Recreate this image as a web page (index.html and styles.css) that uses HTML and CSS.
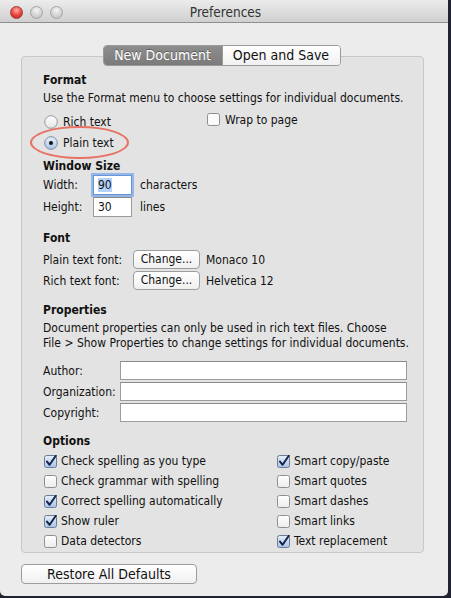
FILE: index.html
```html
<!DOCTYPE html>
<html>
<head>
<meta charset="utf-8">
<title>Preferences</title>
<link rel="stylesheet" href="styles.css">
</head>
<body>
<div class="window">
  <div class="titlebar">
    <div class="lights">
      <span class="light red"></span>
      <span class="light"></span>
      <span class="light"></span>
    </div>
    <div class="title">Preferences</div>
  </div>
  <div class="content">
    <div class="tabview">
      <div class="tabs">
        <div class="tab selected">New Document</div>
        <div class="tab">Open and Save</div>
      </div>
      <div class="box">
        <div class="heading">Format</div>
        <div class="text first">Use the Format menu to choose settings for individual documents.</div>
        <div class="format-grid">
          <div class="opt radio-opt">
            <svg class="radio" width="14" height="14" viewBox="0 0 14 14"><defs><linearGradient id="rg1" x1="0" y1="0" x2="0" y2="1"><stop offset="0" stop-color="#ffffff"/><stop offset="1" stop-color="#e4e4e4"/></linearGradient></defs><circle cx="7" cy="7" r="6.3" fill="url(#rg1)" stroke="#8e8e8e" stroke-width="0.9"/></svg>
            <span>Rich text</span>
          </div>
          <div class="opt check-opt">
            <svg class="cb" width="13" height="13" viewBox="0 0 13 13"><rect x="0.5" y="0.5" width="12" height="12" rx="2" fill="#fbfbfb" stroke="#8f8f8f"/></svg>
            <span>Wrap to page</span>
          </div>
          <div class="opt radio-opt">
            <svg class="radio" width="14" height="14" viewBox="0 0 14 14"><defs><linearGradient id="rg2" x1="0" y1="0" x2="0" y2="1"><stop offset="0" stop-color="#e8f1fb"/><stop offset="1" stop-color="#a9c6ea"/></linearGradient></defs><circle cx="7" cy="7" r="6.3" fill="url(#rg2)" stroke="#6f7f99" stroke-width="0.9"/><circle cx="7" cy="7" r="2" fill="#111"/></svg>
            <span>Plain text</span>
            <span class="annotation"></span>
          </div>
          <div></div>
        </div>

        <div class="heading ws">Window Size</div>
        <div class="field-row size-row">
          <span class="lbl-short">Width:</span>
          <span class="input small focused"><span class="sel">90</span></span>
          <span class="unit">characters</span>
        </div>
        <div class="field-row size-row">
          <span class="lbl-short">Height:</span>
          <span class="input small">30</span>
          <span class="unit">lines</span>
        </div>

        <div class="heading font-h">Font</div>
        <div class="field-row font-row first-font">
          <span class="lbl-font">Plain text font:</span>
          <span class="btn">Change...</span>
          <span class="unit">Monaco 10</span>
        </div>
        <div class="field-row font-row">
          <span class="lbl-font">Rich text font:</span>
          <span class="btn">Change...</span>
          <span class="unit">Helvetica 12</span>
        </div>

        <div class="heading props-h">Properties</div>
        <div class="text desc">Document properties can only be used in rich text files. Choose<br>File &gt; Show Properties to change settings for individual documents.</div>
        <div class="field-row prop-row first-prop">
          <span class="lbl-prop">Author:</span>
          <span class="input wide"></span>
        </div>
        <div class="field-row prop-row">
          <span class="lbl-prop">Organization:</span>
          <span class="input wide"></span>
        </div>
        <div class="field-row prop-row">
          <span class="lbl-prop">Copyright:</span>
          <span class="input wide"></span>
        </div>

        <div class="heading opts-h">Options</div>
        <div class="options">
          <div class="opt"><svg class="cb" width="13" height="13" viewBox="0 0 13 13"><use href="#on"/></svg><span>Check spelling as you type</span></div>
          <div class="opt"><svg class="cb" width="13" height="13" viewBox="0 0 13 13"><use href="#on"/></svg><span>Smart copy/paste</span></div>
          <div class="opt"><svg class="cb" width="13" height="13" viewBox="0 0 13 13"><use href="#off"/></svg><span>Check grammar with spelling</span></div>
          <div class="opt"><svg class="cb" width="13" height="13" viewBox="0 0 13 13"><use href="#off"/></svg><span>Smart quotes</span></div>
          <div class="opt"><svg class="cb" width="13" height="13" viewBox="0 0 13 13"><use href="#on"/></svg><span>Correct spelling automatically</span></div>
          <div class="opt"><svg class="cb" width="13" height="13" viewBox="0 0 13 13"><use href="#off"/></svg><span>Smart dashes</span></div>
          <div class="opt"><svg class="cb" width="13" height="13" viewBox="0 0 13 13"><use href="#on"/></svg><span>Show ruler</span></div>
          <div class="opt"><svg class="cb" width="13" height="13" viewBox="0 0 13 13"><use href="#off"/></svg><span>Smart links</span></div>
          <div class="opt"><svg class="cb" width="13" height="13" viewBox="0 0 13 13"><use href="#off"/></svg><span>Data detectors</span></div>
          <div class="opt"><svg class="cb" width="13" height="13" viewBox="0 0 13 13"><use href="#on"/></svg><span>Text replacement</span></div>
        </div>
      </div>
    </div>
    <div class="bottom">
      <span class="btn restore">Restore All Defaults</span>
    </div>
  </div>
</div>

<svg class="defs" width="0" height="0">
  <defs>
    <linearGradient id="cbon" x1="0" y1="0" x2="0" y2="1"><stop offset="0" stop-color="#e6effa"/><stop offset="1" stop-color="#a8c4e8"/></linearGradient>
    <linearGradient id="cboff" x1="0" y1="0" x2="0" y2="1"><stop offset="0" stop-color="#ffffff"/><stop offset="1" stop-color="#ececec"/></linearGradient>
    <g id="on">
      <rect x="0.5" y="0.5" width="12" height="12" rx="2" fill="url(#cbon)" stroke="#6d7c95"/>
      <path d="M3 6.6 L5.6 9.8 L11.8 0.8" fill="none" stroke="#15254a" stroke-width="2" stroke-linecap="round" stroke-linejoin="round"/>
    </g>
    <g id="off">
      <rect x="0.5" y="0.5" width="12" height="12" rx="2" fill="url(#cboff)" stroke="#8f8f8f"/>
    </g>
  </defs>
</svg>
</body>
</html>
```

FILE: styles.css
```css
html, body {
  margin: 0;
  padding: 0;
  background: #1f2230;
}
body {
  width: 451px;
  height: 598px;
  font-family: "DejaVu Sans Condensed", "DejaVu Sans", sans-serif;
  font-size: 12px;
  color: #111;
}
.defs { position: absolute; width: 0; height: 0; }

.window {
  width: 448px;
  height: 596px;
  background: #ececec;
  border-radius: 0 0 5px 5px;
  display: flex;
  flex-direction: column;
  overflow: hidden;
}

.titlebar {
  height: 23px;
  flex: none;
  background: linear-gradient(#ececec, #d0d0d0);
  border-bottom: 1px solid #8e8e8e;
  box-sizing: border-box;
  display: flex;
  align-items: center;
  padding-top: 2px;
}
.lights {
  display: flex;
  gap: 7px;
  padding-left: 10px;
}
.light {
  width: 13px;
  height: 13px;
  border-radius: 50%;
  box-sizing: border-box;
  border: 1px solid #a4a4a4;
  background: radial-gradient(circle at 50% 30%, #f4f4f4 0, #d6d6d6 50%, #bdbdbd 100%);
}
.light.red {
  border-color: #a53a33;
  background: radial-gradient(circle at 50% 30%, #ffb0a8 0, #e8413a 55%, #b72620 100%);
}
.title {
  flex: 1;
  text-align: center;
  font-size: 13.5px;
  color: #333;
  margin-right: 60px;
}

.content {
  padding: 22px 24px 0 21px;
}

.tabview {
  display: flex;
  flex-direction: column;
  align-items: center;
}
.tabs {
  display: flex;
  height: 21px;
  border: 1px solid #9a9a9a;
  border-radius: 4px;
  box-sizing: border-box;
  overflow: hidden;
  position: relative;
  z-index: 1;
  margin-bottom: -10px;
  margin-left: -2px;
}
.tab {
  font-size: 14px;
  line-height: 19px;
  text-align: center;
  background: linear-gradient(#ffffff, #f1f1f1);
  color: #111;
}
.tab:first-child { width: 118px; }
.tab:last-child { width: 117px; border-left: 1px solid #9a9a9a; }
.tab.selected {
  background: linear-gradient(#8d8d8d, #7b7b7b);
  color: #fff;
  text-shadow: 0 -1px 0 rgba(0,0,0,0.35);
}

.box {
  align-self: stretch;
  background: #e3e3e3;
  border: 1px solid #c8c8c8;
  border-radius: 4px;
  padding: 15px 0 0 21px;
  height: 497px;
  box-sizing: border-box;
}

.heading {
  font-weight: bold;
  height: 16px;
  line-height: 16px;
}
.text { line-height: 16px; }
.text.first { margin-top: 2px; height: 16px; white-space: nowrap; }

.format-grid {
  margin-top: 5px;
  display: grid;
  grid-template-columns: 164px 1fr;
  grid-auto-rows: 21px;
}
.opt {
  display: flex;
  align-items: center;
  position: relative;
  white-space: nowrap;
}
.radio-opt svg { margin-left: 1px; margin-right: 5px; }
.check-opt svg { margin-right: 5px; }
.check-opt { align-items: flex-start; padding-top: 2px; }

.annotation {
  position: absolute;
  left: -13px;
  top: -6px;
  width: 95px;
  height: 29px;
  border: 2px solid rgba(232, 94, 78, 0.85);
  border-radius: 50%;
}

.ws { margin-top: 5px; }
.field-row {
  display: flex;
  align-items: center;
  white-space: nowrap;
}
.size-row { height: 22px; }
.lbl-short { width: 50px; }
.input {
  background: #fff;
  border: 1px solid #9b9b9b;
  border-top-color: #8a8a8a;
  box-sizing: border-box;
  height: 20px;
  line-height: 18px;
  padding-left: 4px;
}
.input.small { width: 39px; }
.input.focused {
  border-color: #6b95d3;
  box-shadow: 0 0 0 2px #93b7ea;
}
.sel { background: #b4d2fb; }
.unit { margin-left: 8px; }

.font-h { margin-top: 12px; }
.font-row { height: 21px; }
.first-font { margin-top: 3px; }
.lbl-font { width: 90px; }
.btn {
  display: inline-block;
  height: 19px;
  line-height: 17px;
  box-sizing: border-box;
  border: 1px solid #9d9d9d;
  border-radius: 4px;
  background: linear-gradient(#ffffff, #f0f0f0);
  text-align: center;
  width: 67px;
}
.font-row .unit { margin-left: 6px; }

.props-h { margin-top: 11px; }
.desc { margin-top: 3px; line-height: 15px; white-space: nowrap; }
.prop-row { height: 21px; }
.first-prop { margin-top: 9px; }
.lbl-prop { width: 77px; }
.input.wide { width: 287px; height: 19px; }

.opts-h { margin-top: 10px; }
.options {
  margin-top: 2px;
  display: grid;
  grid-template-columns: 233px 1fr;
  grid-auto-rows: 20px;
}
.options .opt svg { margin-left: 1px; margin-right: 4px; }

.bottom {
  margin-top: 11px;
}
.restore {
  width: 176px;
  height: 20px;
  line-height: 18px;
  font-size: 14px;
}
```
